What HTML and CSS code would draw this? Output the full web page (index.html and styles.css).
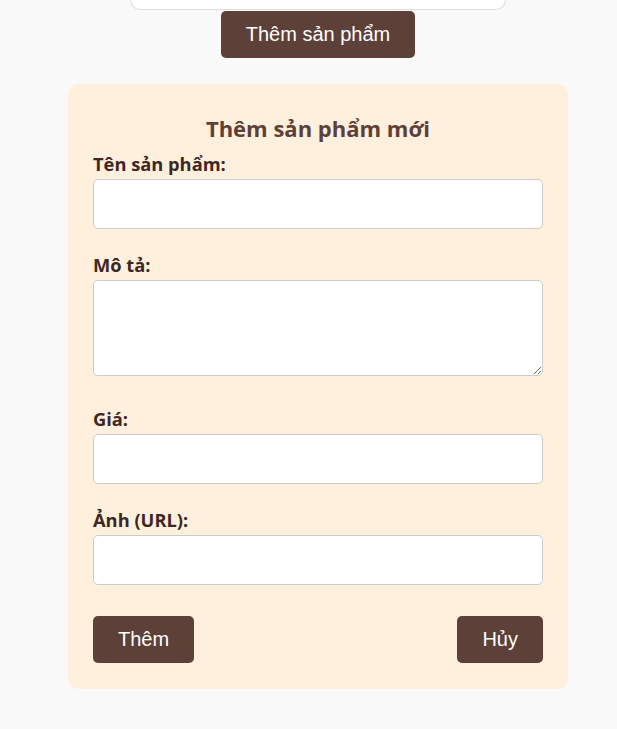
FILE: index.html
```html
<!DOCTYPE html>
<html lang="vi">
<head>
<meta charset="utf-8">
<title>Thêm sản phẩm</title>
<link rel="stylesheet" href="styles.css">
</head>
<body>
<div class="page">
  <div class="list-card"></div>
  <button class="btn btn-open" type="button">Thêm sản phẩm</button>
  <form class="form-card">
    <h2 class="form-title">Thêm sản phẩm mới</h2>
    <label class="field-label" for="name">Tên sản phẩm:</label>
    <input class="field-input" id="name" type="text">
    <label class="field-label" for="desc">Mô tả:</label>
    <textarea class="field-input field-area" id="desc"></textarea>
    <label class="field-label" for="price">Giá:</label>
    <input class="field-input" id="price" type="number">
    <label class="field-label" for="img">Ảnh (URL):</label>
    <input class="field-input" id="img" type="text">
    <div class="form-actions">
      <button class="btn" type="submit">Thêm</button>
      <button class="btn" type="button">Hủy</button>
    </div>
  </form>
</div>
</body>
</html>
```
FILE: styles.css
```css
* { box-sizing: border-box; }
html, body { margin: 0; padding: 0; }
body {
  background: #f9f9f9;
  font-family: "Open Sans", "Noto Sans", sans-serif;
}
.page {
  width: 500px;
  margin-left: 68px;
  display: flex;
  flex-direction: column;
  align-items: center;
}
.list-card {
  width: 376px;
  height: 10px;
  background: #fff;
  border: 1px solid #dddddd;
  border-top: none;
  border-radius: 0 0 12px 12px;
}
.btn {
  font-family: "Liberation Sans", Arial, sans-serif;
  font-size: 20px;
  line-height: 23px;
  color: #fff;
  background: #5d4037;
  border: none;
  border-radius: 5px;
  padding: 12px 25px;
  cursor: pointer;
}
.btn-open {
  margin-top: 1px;
}
.form-card {
  width: 500px;
  margin-top: 26px;
  background: #fff0de;
  border-radius: 10px;
  padding: 29px 25px 26px;
  display: flex;
  flex-direction: column;
}
.form-title {
  margin: 0 0 10px;
  font-size: 22px;
  line-height: 30px;
  font-weight: 700;
  color: #5d4037;
  text-align: center;
}
.field-label {
  display: block;
  font-size: 18.3px;
  line-height: 22px;
  font-weight: 700;
  color: #3e2723;
  margin-bottom: 4px;
}
.field-input {
  display: block;
  width: 450px;
  height: 50px;
  margin: 0 0 25px;
  padding: 10px;
  border: 1px solid #cccccc;
  border-radius: 5px;
  background: #fff;
  font-family: "Open Sans", sans-serif;
  font-size: 16px;
}
.field-area {
  height: 96px;
  margin-bottom: 32px;
  resize: vertical;
}
.form-actions {
  display: flex;
  justify-content: space-between;
  margin-top: 6px;
}
```
